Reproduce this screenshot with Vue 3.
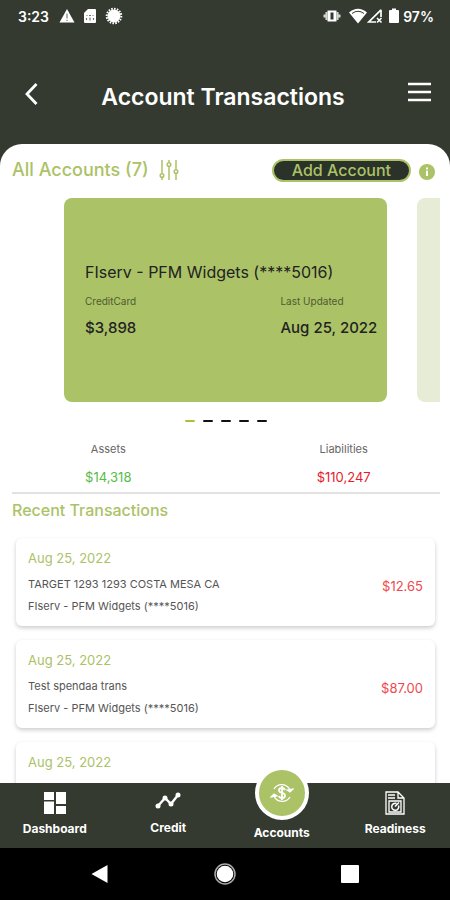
<template>
    <div class="app">
        <header class="header">
            <div class="status">
                <span class="status__time">3:23</span>
                <svg class="status__icon" width="16" height="16" viewBox="0 0 16 16">
                    <path d="M8 1 15.500 14.500H.5z" fill="#fff" />
                    <path d="M8 5.500v5M8 11.700v1.300" stroke="#868a82" stroke-width="1.300" />
                </svg>
                <svg class="status__icon" width="14" height="16" viewBox="0 0 14 16">
                    <path d="M5 1h7q1 0 1 1v12q0 1-1 1H2q-1 0-1-1V5z" fill="#fff" />
                    <path d="M3.500 7.500h1M6 7.500h2M9.500 7.500h1M3.500 10v2M10.500 10v2M7 9.500v3" stroke="#6f756b" stroke-width="1.200" />
                </svg>
                <svg class="status__icon" width="18" height="18" viewBox="0 0 18 18">
                    <circle cx="9" cy="9" r="6.500" fill="#fff" />
                    <circle cx="9" cy="9" r="7.300" fill="none" stroke="#fff" stroke-width="2" stroke-dasharray="1.600 1.250" />
                </svg>
                <span class="status__space"></span>
                <svg class="status__icon" width="18" height="16" viewBox="0 0 18 16">
                    <path d="M4.500 2.500h9v11h-9z" fill="#fff" />
                    <path d="M7.500 4.500h3v7h-3z" fill="#343a30" />
                    <path d="M3.500 4v8M1.500 6.500v3M14.500 4v8M16.500 6.500v3" stroke="#d5d7d3" stroke-width="2" />
                </svg>
                <svg class="status__icon" width="18" height="16" viewBox="0 0 18 16">
                    <path d="M0 4.500Q9-3 18 4.500L9 15.500z" fill="#fff" />
                    <path d="M3 5.500Q9 1 15 5.500" fill="none" stroke="#343a30" stroke-width="1" />
                </svg>
                <svg class="status__icon status__icon_signal" width="16" height="16" viewBox="0 0 16 16">
                    <path d="M14 1.800V9M14 1.800 1.800 14H9" fill="none" stroke="#fff" stroke-width="1.700" />
                    <path d="m10 10 4.500 4.500M14.500 10 10 14.500" stroke="#fff" stroke-width="1.600" />
                </svg>
                <svg class="status__icon status__icon_battery" width="10" height="16" viewBox="0 0 10 16">
                    <path d="M3 .5h4V2h2q1 0 1 1v11q0 1-1 1H1q-1 0-1-1V3q0-1 1-1h2z" fill="#fff" />
                </svg>
                <span class="status__battery">97%</span>
            </div>
            <div class="titlebar">
                <button class="icon-button icon-button_back" type="button" aria-label="Back">
                    <svg width="14" height="22" viewBox="0 0 14 22">
                        <path d="M12.500 1 3 11l9.500 10" fill="none" stroke="#fff" stroke-width="2.800" />
                    </svg>
                </button>
                <h1 class="titlebar__title">Account Transactions</h1>
                <button class="icon-button icon-button_menu" type="button" aria-label="Menu">
                    <svg width="24" height="20" viewBox="0 0 24 20">
                        <path d="M0 2h23M0 10h23M0 18h23" stroke="#fff" stroke-width="2.400" />
                    </svg>
                </button>
            </div>
        </header>

        <main class="sheet">
            <div class="accounts">
                <h2 class="accounts__title">All Accounts (7)</h2>
                <button class="icon-button icon-button_filter" type="button" aria-label="Filter">
                    <svg width="20" height="20" viewBox="0 0 20 20" fill="none" stroke="#abc267" stroke-width="1.500">
                        <path d="M3 0v13M3 18v2M10 0v2M10 7v13M17 0v9M17 14v6" />
                        <circle cx="3" cy="15.500" r="1.800" />
                        <circle cx="10" cy="4.500" r="1.800" />
                        <circle cx="17" cy="11.500" r="1.800" />
                    </svg>
                </button>
                <button class="accounts__add" type="button">Add Account</button>
                <button class="icon-button icon-button_info" type="button" aria-label="Info">
                    <svg width="16" height="16" viewBox="0 0 16 16">
                        <circle cx="8" cy="8" r="8" fill="#abc267" />
                        <path d="M8 3.500v2M8 6.700v5.300" stroke="#fff" stroke-width="2" />
                    </svg>
                </button>
            </div>

            <div class="carousel">
                <article class="card">
                    <h3 class="card__name">{{ account.name }}</h3>
                    <div class="card__row">
                        <div>
                            <p class="card__label">{{ account.type }}</p>
                            <p class="card__value">{{ account.balance }}</p>
                        </div>
                        <div>
                            <p class="card__label">Last Updated</p>
                            <p class="card__value">{{ account.updated }}</p>
                        </div>
                    </div>
                </article>
                <article class="card card_next"></article>
            </div>
            <div class="dots">
                <button v-for="n in 5" :key="n" class="dots__item" :class="{ 'dots__item_active': n === slide }"
                    type="button" :aria-label="`Account ${n}`" @click="slide = n"></button>
            </div>

            <div class="summary">
                <div class="summary__item">
                    <p class="summary__label">Assets</p>
                    <p class="summary__value">$14,318</p>
                </div>
                <div class="summary__item">
                    <p class="summary__label">Liabilities</p>
                    <p class="summary__value summary__value_debt">$110,247</p>
                </div>
            </div>

            <h2 class="recent">Recent Transactions</h2>
            <ul class="transactions">
                <li v-for="(item, index) in transactions" :key="index" class="transaction">
                    <div>
                        <p class="transaction__date">{{ item.date }}</p>
                        <template v-if="item.text">
                            <p class="transaction__text">{{ item.text }}</p>
                            <p class="transaction__text">{{ account.name }}</p>
                        </template>
                    </div>
                    <span v-if="item.amount" class="transaction__amount">{{ item.amount }}</span>
                </li>
            </ul>
        </main>

        <nav class="tabs">
            <a class="tabs__item" href="#">
                <svg class="tabs__icon" width="24" height="24" viewBox="0 0 24 24" fill="#fff">
                    <path d="M1 1h10v8H1zM13 1h10v12H13zM1 10.500h10V23H1zM13 15h10v8H13z" />
                </svg>
                Dashboard
            </a>
            <a class="tabs__item tabs__item_credit" href="#">
                <svg class="tabs__icon" width="26" height="20" viewBox="0 0 26 20">
                    <path d="m3 15 7-8 6 6 7-9" fill="none" stroke="#fff" stroke-width="2.400" />
                    <g fill="#fff">
                        <circle cx="3" cy="15" r="2.500" />
                        <circle cx="10" cy="7" r="2.500" />
                        <circle cx="16" cy="13" r="2.500" />
                        <circle cx="23" cy="4" r="2.500" />
                    </g>
                </svg>
                Credit
            </a>
            <a class="tabs__item tabs__item_active" href="#">
                <span class="tabs__bubble">
                    <svg width="24" height="24" viewBox="0 0 24 24" fill="none" stroke="#fff" stroke-width="1.300">
                        <path d="M4 8a9 9 0 0 1 16 1M20 16A9 9 0 0 1 4 15" />
                        <path d="m23 8-3 3-3-2zM1 16l3-3 3 2z" fill="#fff" />
                        <path d="M15 9q-1-2-3-2-3 0-3 2.300 0 2 3 2.500 3 .6 3 2.600 0 2.600-3 2.600-2.500 0-3-2M12 5v14" stroke-width="1.800" />
                    </svg>
                </span>
                Accounts
            </a>
            <a class="tabs__item" href="#">
                <svg class="tabs__icon" width="22" height="24" viewBox="0 0 22 24" fill="none" stroke="#fff" stroke-width="1.300">
                    <path d="M2 1h12l6 6v16H2zM14 1v6h6M4 4h7M4 7h7" />
                    <path d="M5 10h12v11H5z" />
                    <path d="M14.500 14.500a3.500 3.500 0 1 1-2-2M11 15.500l4-4" stroke-width="1.500" />
                </svg>
                Readiness
            </a>
        </nav>

        <div class="system">
            <button class="icon-button" type="button" aria-label="System back">
                <svg width="20" height="20" viewBox="0 0 20 20">
                    <path d="M17.500 1v18L1.500 10z" fill="#fff" />
                </svg>
            </button>
            <button class="icon-button" type="button" aria-label="Home">
                <svg width="22" height="22" viewBox="0 0 22 22">
                    <circle cx="11" cy="11" r="10" fill="none" stroke="#aaa" stroke-width="1.500" />
                    <circle cx="11" cy="11" r="8.300" fill="#fff" />
                </svg>
            </button>
            <button class="icon-button" type="button" aria-label="Overview">
                <svg width="20" height="20" viewBox="0 0 20 20">
                    <rect x="1" y="1" width="18" height="18" rx="1" fill="#fff" />
                </svg>
            </button>
        </div>
    </div>
</template>

<script setup>
import { ref } from 'vue'

const slide = ref(1)

const account = {
    name: 'FIserv - PFM Widgets (****5016)',
    type: 'CreditCard',
    balance: '$3,898',
    updated: 'Aug 25, 2022'
}

const transactions = [
    { date: 'Aug 25, 2022', text: 'TARGET 1293 1293 COSTA MESA CA', amount: '$12.65' },
    { date: 'Aug 25, 2022', text: 'Test spendaa trans', amount: '$87.00' },
    { date: 'Aug 25, 2022' }
]
</script>

<style>
body {
    margin: 0;
    background: #343a30;
}
</style>

<style scoped>
.app {
    display: flex;
    flex-direction: column;
    height: 100vh;
    overflow: hidden;
    background: #343a30;
    font-family: Inter, sans-serif;
    color: #222;
}

h1,
h2,
h3,
p,
ul {
    margin: 0;
    padding: 0;
}

button {
    font-family: inherit;
    cursor: pointer;
}

svg {
    display: block;
}

.icon-button {
    display: flex;
    padding: 0;
    border: 0;
    background: none;
}

.header {
    flex: none;
    color: #fff;
}

.status {
    display: flex;
    align-items: center;
    height: 32px;
    padding: 0 16px 0 18px;
    font-size: 14px;
    font-weight: 600;
}

.status__icon {
    margin-left: 8px;
}

.status__time {
    margin-right: 2px;
}

.status__space {
    flex: 1;
}

.status__icon_signal {
    margin-left: 0;
}

.status__icon_battery {
    margin-left: 6px;
}

.status__battery {
    margin-left: 4px;
}

.titlebar {
    display: flex;
    align-items: center;
    justify-content: space-between;
    height: 64px;
    padding: 33px 18px 15px 24px;
}

.titlebar__title {
    font-size: 23px;
    line-height: 32px;
    font-weight: 600;
}

.icon-button_back {
    margin-bottom: 6px;
}

.icon-button_menu {
    margin-bottom: 10px;
}

.sheet {
    flex: 1;
    min-height: 0;
    overflow: hidden;
    padding: 12px 10px 0 12px;
    border-radius: 22px 22px 0 0;
    background: #fff;
}

.accounts {
    display: flex;
    align-items: center;
    height: 28px;
}

.accounts__title {
    font-size: 18px;
    line-height: 26px;
    font-weight: 500;
    color: #abc267;
}

.icon-button_filter {
    margin-left: 10px;
}

.accounts__add {
    height: 23px;
    margin-left: auto;
    padding: 0 18px;
    border: 2px solid #abc267;
    border-radius: 12px;
    background: #2b3229;
    font-size: 16px;
    line-height: 19px;
    font-weight: 500;
    color: #abc267;
}

.icon-button_info {
    margin: 4px 5px 0 8px;
}

.carousel {
    display: flex;
    gap: 30px;
    margin-top: 14px;
    padding-left: 52px;
    overflow: hidden;
}

.card {
    flex: 0 0 86%;
    box-sizing: border-box;
    height: 204px;
    padding: 62px 10px 0 21px;
    border-radius: 8px;
    background: #abc267;
}

.card_next {
    background: #e6ecd5;
}

.card__name {
    font-size: 16px;
    line-height: 24px;
    font-weight: 400;
}

.card__row {
    display: flex;
    justify-content: space-between;
    margin-top: 8px;
}

.card__label {
    font-size: 10px;
    line-height: 18px;
    color: #4f5b30;
}

.card__value {
    margin-top: 8px;
    font-size: 15px;
    line-height: 20px;
    font-weight: 500;
}

.dots {
    display: flex;
    justify-content: center;
    gap: 8px;
    margin-top: 18px;
}

.dots__item {
    width: 10px;
    height: 2px;
    padding: 0;
    border: 0;
    border-radius: 1px;
    background: #111;
}

.dots__item_active {
    background: #abc236;
}

.summary {
    display: flex;
    justify-content: space-between;
    height: 58px;
    margin-top: 12px;
    border-bottom: 2px solid #e2e2e2;
}

.summary__item {
    width: 45%;
    padding-top: 4px;
    text-align: center;
}

.summary__label {
    font-size: 11px;
    line-height: 22px;
    color: #666;
}

.summary__value {
    margin-top: 6px;
    font-size: 13px;
    line-height: 22px;
    color: #55bd45;
}

.summary__value_debt {
    color: #e61b2c;
}

.recent {
    margin-top: 4px;
    font-size: 16px;
    line-height: 24px;
    font-weight: 500;
    color: #abc267;
}

.transactions {
    display: flex;
    flex-direction: column;
    gap: 14px;
    padding: 16px 5px 0 4px;
    list-style: none;
}

.transaction {
    display: flex;
    justify-content: space-between;
    box-sizing: border-box;
    height: 88px;
    padding: 9px 12px;
    border-radius: 6px;
    background: #fff;
    box-shadow: 0 2px 4px #ccc;
}

.transaction__date {
    margin-bottom: 4px;
    font-size: 13px;
    line-height: 22px;
    color: #abc267;
}

.transaction__text {
    font-size: 11px;
    line-height: 22px;
    color: #555;
}

.transaction__amount {
    align-self: center;
    padding-top: 8px;
    font-size: 13px;
    color: #f0484e;
}

.tabs {
    display: flex;
    flex: none;
    height: 65px;
    margin: 0 -2px;
    background: #343a30;
}

.tabs__item {
    display: flex;
    flex: 1;
    flex-direction: column;
    align-items: center;
    padding-top: 8px;
    font-size: 12px;
    line-height: 16px;
    font-weight: 700;
    color: #fff;
    text-decoration: none;
}

.tabs__icon {
    margin-bottom: 6px;
}

.tabs__item_credit .tabs__icon {
    margin-bottom: 9px;
}

.tabs__item_active {
    margin-top: -17px;
    padding-top: 0;
}

.tabs__bubble {
    display: flex;
    align-items: center;
    justify-content: center;
    width: 46px;
    height: 46px;
    margin-bottom: 5px;
    border: 4px solid #fff;
    border-radius: 50%;
    background: #abc267;
}

.system {
    display: flex;
    flex: none;
    align-items: center;
    justify-content: space-between;
    height: 52px;
    padding: 0 90px;
    background: #000;
}
</style>
